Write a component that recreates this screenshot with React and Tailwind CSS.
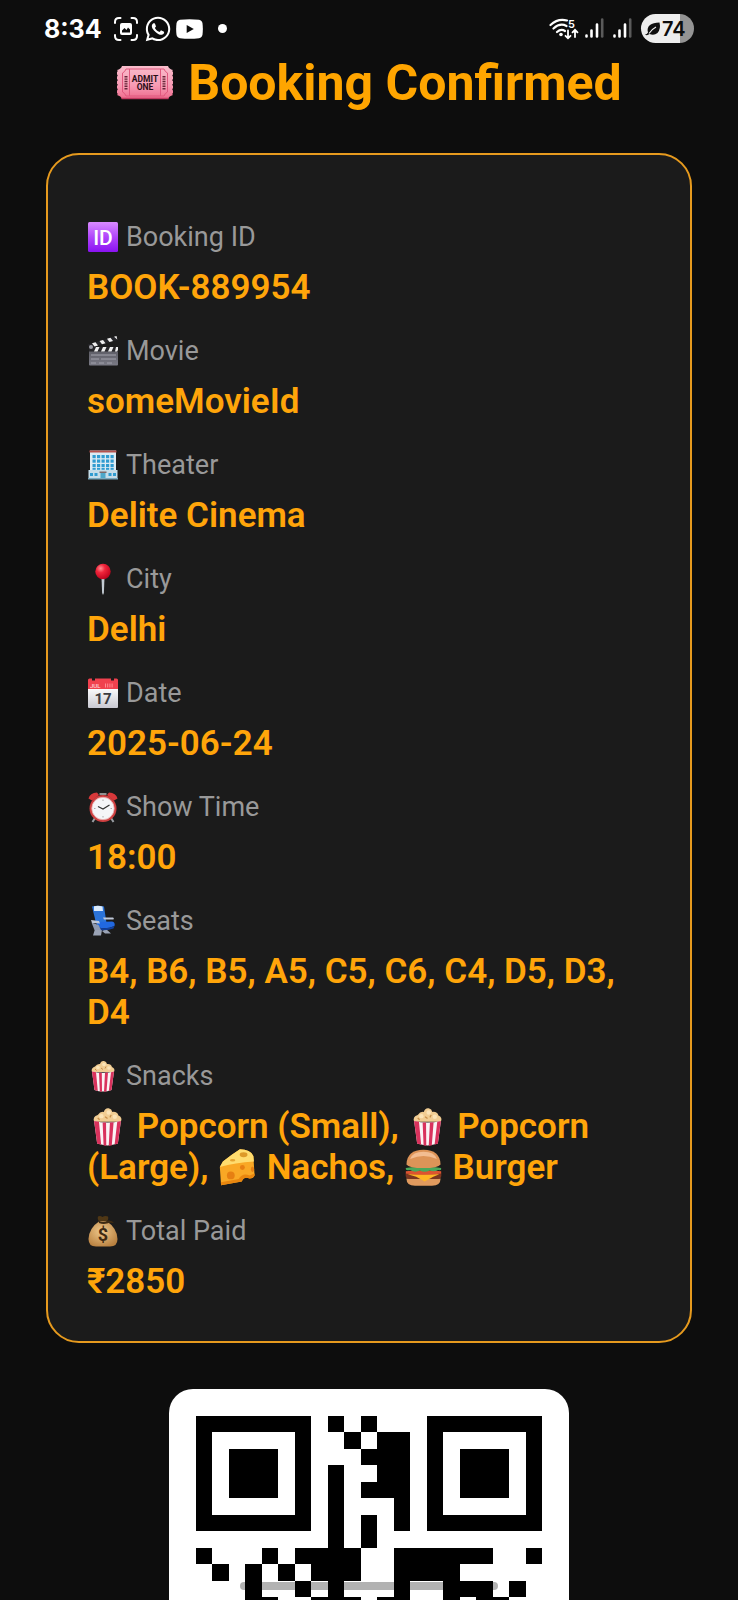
import React from "react";
import { FaWhatsapp } from "react-icons/fa";

function Ticket({ className }) {
  const notches = [5, 9.6, 14.2, 18.8, 23.4, 28];
  return (
    <svg viewBox="0 0 58 36" className={className} aria-hidden="true">
      <defs>
        <linearGradient id="tk" x1="0" y1="0" x2="0" y2="1">
          <stop offset="0" stopColor="#f9bccb" />
          <stop offset="0.6" stopColor="#f79ab3" />
          <stop offset="1" stopColor="#ee6a8c" />
        </linearGradient>
      </defs>
      <path d="M6 1H52Q53 4 57 5V30Q53 31 52 34H6Q5 31 1 30V5Q5 4 6 1Z" fill="url(#tk)" />
      <path d="M5.500 33.500H52.500" stroke="#c23a61" strokeWidth="1.600" />
      {notches.map((y) => (
        <g key={y} fill="#0d0d0d">
          <circle cx="0.600" cy={y + 1} r="1.100" />
          <circle cx="57.400" cy={y + 1} r="1.100" />
        </g>
      ))}
      <path d="M10 4H48Q49 7 51.500 8V27Q49 28 48 31H10Q9 28 6.500 27V8Q9 7 10 4Z" fill="none" stroke="#e0587e" strokeWidth="1" />
      <path d="M13.500 4V31M44.500 4V31" stroke="#e0587e" strokeWidth="1" />
      <path d="M10 11V25M48 11V25" stroke="#66283a" strokeWidth="3" strokeDasharray="1.400 1" />
      <g fill="#2a0e16" fontFamily="Roboto, sans-serif" fontWeight="700" fontSize="8.500" textAnchor="middle">
        <text x="29" y="16.500">ADMIT</text>
        <text x="29" y="25">ONE</text>
      </g>
    </svg>
  );
}

function IdBadge() {
  return (
    <>
      <defs>
        <linearGradient id="idg" x1="0" y1="0" x2="0" y2="1">
          <stop offset="0" stopColor="#d98bff" />
          <stop offset="0.500" stopColor="#b046fb" />
          <stop offset="1" stopColor="#8a12f2" />
        </linearGradient>
      </defs>
      <rect x="1" y="1" width="30" height="30" rx="1.500" fill="url(#idg)" />
      <text x="16" y="23.500" fill="#fff" fontFamily="Roboto, sans-serif" fontWeight="500" fontSize="21" textAnchor="middle">ID</text>
    </>
  );
}

function Clapper() {
  return (
    <>
      <defs>
        <linearGradient id="clg" x1="0" y1="0" x2="0" y2="1">
          <stop offset="0" stopColor="#55555d" />
          <stop offset="1" stopColor="#7b7b86" />
        </linearGradient>
      </defs>
      <path d="M1 9.500L29.500 1L30.500 5L2.500 13Z" fill="#26262a" />
      <path d="M5 8.300L8.500 7.300L11 10.500L7.500 11.500ZM12.500 6.100L16 5.100L18.500 8.300L15 9.300ZM20 3.800L23.500 2.800L26 6.100L22.500 7.100ZM27 1.700L29.500 1L30.300 4.500Z" fill="#eee" />
      <rect x="2" y="12" width="29" height="18.500" rx="1" fill="url(#clg)" />
      <rect x="2" y="12" width="29" height="4.500" fill="#26262a" />
      <path d="M9 12H12.500L10.500 16.500H7ZM16 12H19.500L17.500 16.500H14ZM23 12H26.500L24.500 16.500H21ZM29 12H31V15L30 16.500H28Z" fill="#eee" />
      <path d="M4 20H29M4 24H12M14 24H29M4 28H9M12 28H17M20 28H25" stroke="#a3a3ad" strokeWidth="1" />
      <circle cx="4" cy="12" r="2" fill="#9b9ba3" />
    </>
  );
}

function Building() {
  return (
    <>
      <rect x="3" y="1.500" width="26" height="28" fill="#dcebf3" />
      <rect x="2.500" y="1.500" width="27" height="2" fill="#b4524e" />
      <path d="M1.500 21H30.500V29.500H1.500Z" fill="#c4dce8" />
      {[6, 10.500, 15].map((y) =>
        [6, 10.500, 15, 19.500, 24].map((x) => <rect key={x + "-" + y} x={x - 0.500} y={y} width="3.200" height="3.200" fill="#2f9bd0" />)
      )}
      {[6, 10.500, 15, 19.500, 24].map((x) => (
        <rect key={x} x={x - 0.500} y="19" width="3.200" height="1.800" fill="#2f9bd0" />
      ))}
      <path d="M3 24H6V27H3ZM7.500 24H10.500V27H7.500ZM21.500 24H24.500V27H21.500ZM26 24H29V27H26Z" fill="#2f9bd0" />
      <path d="M12.500 22.500H19.500V24H12.500Z" fill="#7d6a6a" />
      <path d="M13.500 24H18.500V29.500H13.500Z" fill="#4ea7c9" />
      <path d="M1 29H31V30.500H1Z" fill="#79a8bd" />
    </>
  );
}

function Pin() {
  return (
    <>
      <defs>
        <radialGradient id="png" cx="0.350" cy="0.300" r="0.700">
          <stop offset="0" stopColor="#ff8e93" />
          <stop offset="0.400" stopColor="#f0253b" />
          <stop offset="1" stopColor="#c0051f" />
        </radialGradient>
      </defs>
      <path d="M14.500 14H17.500L16.900 30L16 32L15.100 30Z" fill="#c3cbd2" />
      <circle cx="16" cy="8.500" r="7.700" fill="url(#png)" />
    </>
  );
}

function Calendar() {
  return (
    <>
      <defs>
        <linearGradient id="cag" x1="0" y1="0" x2="0" y2="1">
          <stop offset="0" stopColor="#fff" />
          <stop offset="1" stopColor="#c9c9d2" />
        </linearGradient>
      </defs>
      <path d="M1 10H31V30Q31 31 30 31H2Q1 31 1 30Z" fill="url(#cag)" />
      <path d="M1 3Q1 1.500 2.500 1.500H5V3.500H8V1.500H24V3.500H27V1.500H29.500Q31 1.500 31 3V12H1Z" fill="#f0414e" />
      <path d="M18 8.500H26" stroke="#ff8c93" strokeWidth="4" strokeDasharray="1 1.200" />
      <text x="3" y="10.500" fill="#ffd5d8" fontFamily="Roboto, sans-serif" fontWeight="500" fontSize="6">JUL</text>
      <text x="16" y="27" fill="#3c3c40" fontFamily="Roboto, sans-serif" fontWeight="700" fontSize="15" textAnchor="middle">17</text>
    </>
  );
}

function Alarm() {
  return (
    <>
      <path d="M8 27L5.500 31M24 27L26.500 31" stroke="#999ea3" strokeWidth="2" />
      <path d="M1.500 7.500Q3 2 10 1.500L12 4L5 9.500ZM30.500 7.500Q29 2 22 1.500L20 4L27 9.500Z" fill="#d8383a" />
      <path d="M12.500 3H19.500" stroke="#bbb" strokeWidth="1.500" />
      <circle cx="16" cy="17.500" r="13.500" fill="#cf3f40" />
      <circle cx="16" cy="17.500" r="11.200" fill="#f5f5f8" />
      <circle cx="16" cy="17.500" r="11.200" fill="none" stroke="#e7a9a9" strokeWidth="0.800" />
      <path d="M11 15.500L16 18L22.500 14" fill="none" stroke="#333" strokeWidth="1.200" />
      <path d="M16 8.500V10M16 25V26.500M7 17.500H8.500M23.500 17.500H25" stroke="#999" strokeWidth="0.800" />
    </>
  );
}

function Seat() {
  return (
    <>
      <path d="M8 24L6 30.500H14L15 25ZM19 24L24 28.500H18L15 26Z" fill="#9aa3b5" />
      <path d="M5 1.500Q11 0 17 1.500L19.500 18H9Z" fill="#2b73d8" />
      <path d="M7 1.300Q11 0.300 15.500 1.500L16 6H7Z" fill="#dcebfb" />
      <path d="M9 17L25 16.500Q28.500 17 27.500 21Q20 24.500 11 22.500Z" fill="#2168e0" />
      <path d="M11 22.500Q20 24.500 27.500 21L26.500 23.500Q20 26 13 25Z" fill="#123f9c" />
      <path d="M16 12.500L26 12.500Q27.500 13 26.500 14.500L17 14.500ZM4 15L12 16L13 18.500L5 18Z" fill="#bfc8d8" />
      <path d="M4.500 17.500L7.500 25H14L11.500 20Z" fill="#8e99b0" />
    </>
  );
}

function Popcorn() {
  return (
    <>
      <path d="M5 12Q3.500 8 8 6.500Q10 3.500 13 4Q14 0.500 17 1Q19.500 1.500 20 4Q24 3.500 25 7Q28.500 8.500 27 12Z" fill="#f1cd93" />
      <circle cx="11" cy="7.500" r="1.800" fill="#fbe4b8" />
      <circle cx="17" cy="4.500" r="1.800" fill="#fbe4b8" />
      <circle cx="22" cy="8" r="1.800" fill="#fbe4b8" />
      <path d="M14 8L16 9.500M19 6.500L18 8.500M8 9L9.500 10.500" stroke="#c98f4a" strokeWidth="1" />
      <path d="M5 11.500Q16 14 27 11.500L24.500 30Q16 33 7.500 30Z" fill="#faf3f5" />
      <path d="M5 11.500L9 12.200L10.800 31L7.500 30ZM12 12.700L14.800 12.800L15 31.800L12.800 31.500ZM18 12.800L21 12.600L19.500 31.500L17 31.800ZM24 12.200L27 11.500L24.500 30L21.800 31Z" fill="#d9325d" />
    </>
  );
}

function Cheese() {
  return (
    <>
      <path d="M1.500 15.500L4 11Q11 5.500 18 1Q26.500 1 29 6.500L30 22.500Q29 25 26 25Q21 23 19.500 27.500L2.500 30.500Z" fill="#f9a825" />
      <path d="M1.500 15.500L4 11Q11 5.500 18 1Q26.500 1 29 6.500L29.500 11Q14 12 1.500 15.500Z" fill="#ffdc6e" />
      <path d="M2.500 30.500L2.400 28L17 25.500Q20 20 26 22.500L30 21V22.500Q29 25 26 25Q21 23 19.500 27.500Z" fill="#e8860f" />
      <circle cx="10.500" cy="22.500" r="3.200" fill="#e67f12" />
      <circle cx="20" cy="16" r="2" fill="#e67f12" />
      <ellipse cx="28.300" cy="17.500" rx="1.300" ry="2.300" fill="#e67f12" />
      <ellipse cx="21" cy="5.500" rx="3.200" ry="2" fill="#dd9a28" />
      <ellipse cx="12" cy="10" rx="2.200" ry="1" fill="#e5a42f" />
    </>
  );
}

function Burger() {
  return (
    <>
      <path d="M2 25H30Q30 31 23 31H9Q2 31 2 25Z" fill="#e09a5e" />
      <path d="M1.500 20.500H30.500Q31.500 25 28 25.500H4Q0.500 25 1.500 20.500Z" fill="#7a3520" />
      <path d="M3 21.500H29L24 23.500L17 27.500L10 23.500Z" fill="#ffb524" />
      <path d="M1.500 19Q16 17.500 30.500 19V21Q16 23 1.500 21Z" fill="#dd5330" />
      <path d="M1.500 16.500Q3 15.500 16 15.500Q29 15.500 30.500 16.500Q31 19 28 18Q25 20 21 18.500Q17 20.500 13 18.500Q9 20.500 5 18Q1 19 1.500 16.500Z" fill="#4aa85a" />
      <path d="M2 13.500Q2.500 1.500 16 1.500Q29.500 1.500 30 13.500Q28 16.500 16 16.500Q4 16.500 2 13.500Z" fill="#dd9458" />
      <path d="M5 9Q7 3 16 3Q25 3 27 9Q21 6.500 16 6.500Q11 6.500 5 9Z" fill="#f2bd92" />
    </>
  );
}

function MoneyBag() {
  return (
    <>
      <defs>
        <radialGradient id="mbg" cx="0.450" cy="0.400" r="0.650">
          <stop offset="0" stopColor="#f0c98c" />
          <stop offset="1" stopColor="#b98140" />
        </radialGradient>
      </defs>
      <path d="M11 1.500Q13 0.500 15.500 2Q18 0.200 21 1.500Q22 4 19.500 7H12.500Q10 4 11 1.500Z" fill="#4f3715" />
      <path d="M12.500 6H19.500Q30 13 30.500 24Q30.500 31.500 23 31.500H9Q1.500 31.500 1.500 24Q2 13 12.500 6Z" fill="url(#mbg)" />
      <path d="M11.500 5.500Q16 8 21 5.500Q25 5 27 8Q22 7.500 20 8.500Q16 9.500 12 8Z" fill="#3e2b13" />
      <text x="16" y="26" fill="#3f2a12" fontFamily="Roboto, sans-serif" fontWeight="700" fontSize="18" textAnchor="middle">$</text>
    </>
  );
}

function Emoji({ art: Art, large }) {
  return (
    <svg viewBox="0 0 32 32" aria-hidden="true" className={large ? "inline-block h-[39px] w-[41px] align-[-8px]" : "h-8 w-8 shrink-0"}>
      <Art />
    </svg>
  );
}

const details = [
  { icon: IdBadge, label: "Booking ID", value: "BOOK-889954" },
  { icon: Clapper, label: "Movie", value: "someMovieId" },
  { icon: Building, label: "Theater", value: "Delite Cinema" },
  { icon: Pin, label: "City", value: "Delhi" },
  { icon: Calendar, label: "Date", value: "2025-06-24" },
  { icon: Alarm, label: "Show Time", value: "18:00" },
  { icon: Seat, label: "Seats", value: "B4, B6, B5, A5, C5, C6, C4, D5, D3, D4" },
  {
    icon: Popcorn,
    label: "Snacks",
    value: (
      <>
        <Emoji art={Popcorn} large /> Popcorn (Small), <Emoji art={Popcorn} large /> Popcorn (Large),{" "}
        <Emoji art={Cheese} large /> Nachos, <Emoji art={Burger} large /> Burger
      </>
    ),
  },
  { icon: MoneyBag, label: "Total Paid", value: "₹2850" },
];

const qrRows = [
  "#######.#.#...#######",
  "#.....#..#.##.#.....#",
  "#.###.#...###.#.###.#",
  "#.###.#.#..##.#.###.#",
  "#.###.#.#.###.#.###.#",
  "#.....#.#...#.#.....#",
  "#######.#.#.#.#######",
  "........#.#..........",
  "#...#.####..######..#",
  ".#.#.#.###..####.....",
  "...#..#.#...#..###.#.",
  "...##..###.##..#.##..",
];

function QrCode() {
  return (
    <svg viewBox="0 0 21 21" className="block w-full" shapeRendering="crispEdges" role="img" aria-label="Booking QR code">
      {qrRows.map((row, y) =>
        (row.match(/#+|\.+/g) || []).reduce(
          (acc, run) => {
            if (run[0] === "#") acc.items.push(<rect key={y + "-" + acc.x} x={acc.x} y={y} width={run.length} height="1" />);
            acc.x += run.length;
            return acc;
          },
          { x: 0, items: [] }
        ).items
      )}
    </svg>
  );
}

function SignalBars() {
  return (
    <svg viewBox="0 0 19 21" className="h-[21px] w-[19px]" aria-hidden="true">
      <g strokeWidth="2.600" strokeLinecap="round" stroke="#fff">
        <path d="M1.500 17.500V18.500M6.500 12.500V18.500M12 6.500V18.500" />
        <path d="M17.200 1.500V18.500" stroke="#5a5a5a" />
      </g>
    </svg>
  );
}

function StatusBar() {
  return (
    <header className="flex h-[57px] shrink-0 items-center justify-between px-11 text-white">
      <div className="flex items-center">
        <span className="font-[Inter,sans-serif] text-[25px] font-bold leading-8">8:34</span>
        <svg viewBox="0 0 24 24" className="ml-3 h-6 w-6" fill="none" stroke="#fff" strokeWidth="2" strokeLinecap="round" aria-hidden="true">
          <path d="M1 6V5Q1 1 5 1H6.500M17.500 1H19Q23 1 23 5V6M23 18V19Q23 23 19 23H17.500M6.500 23H5Q1 23 1 19V18" />
          <rect x="6" y="6" width="12" height="12" rx="2" fill="#fff" stroke="none" />
          <path d="M8 15.500V13.500L10.500 11L12.500 13L14 10.500L16 12.500V15.500Z" fill="#0d0d0d" stroke="none" />
        </svg>
        <FaWhatsapp className="ml-[6px] h-7 w-7" aria-hidden="true" />
        <svg viewBox="0 0 27 20" className="ml-1 h-5 w-[27px]" aria-hidden="true">
          <path d="M4 0.800Q13.500 -0.300 23 0.800Q26 1.200 26.500 4.500Q27.200 10 26.500 15.500Q26 18.800 23 19.200Q13.500 20.300 4 19.200Q1 18.800 0.500 15.500Q-0.200 10 0.500 4.500Q1 1.200 4 0.800Z" fill="#fff" />
          <path d="M10.700 6V14L17.800 10Z" fill="#0d0d0d" />
        </svg>
        <span className="ml-[15px] h-[9px] w-[9px] rounded-full bg-white" />
      </div>
      <div className="flex items-center">
        <svg viewBox="0 0 30 22" className="h-[22px] w-[30px]" fill="none" stroke="#fff" strokeWidth="2.200" strokeLinecap="round" aria-hidden="true">
          <path d="M1.500 7Q9 0 18 2.500M4.500 10.500Q11 4.500 17.500 8M8 14Q12 10.500 16 13" />
          <circle cx="12" cy="16.500" r="1.800" fill="#fff" stroke="none" />
          <path d="M19 12.500V20M16.500 17.800L19 20.300L21.500 17.800M26 19V12M23.500 14.300L26 11.800L28.500 14.300" strokeWidth="1.800" />
          <text x="19" y="9.500" fill="#fff" stroke="none" fontFamily="Inter, sans-serif" fontWeight="600" fontSize="11">5</text>
        </svg>
        <div className="ml-[6px] flex gap-[9px]">
          <SignalBars />
          <SignalBars />
        </div>
        <div className="ml-[9px] flex h-[29px] w-[53px] items-center rounded-full bg-linear-to-r from-[#ededed] from-74% to-[#949494] to-74% pl-1 text-[#0d0d0d]">
          <svg viewBox="0 0 16 14" className="h-[14px] w-4" aria-hidden="true">
            <path d="M14.500 0.500Q16 7 12.500 11Q9 14 4.500 12Q2 14 0 12.500Q2 12.300 3 10.500Q1.500 6 5 3Q8 0.500 14.500 0.500Z" fill="#0d0d0d" />
            <path d="M4 11.500Q7 7 11 5" fill="none" stroke="#ededed" strokeWidth="1.200" />
          </svg>
          <span className="ml-[1px] font-[Inter,sans-serif] text-[20px] font-semibold leading-6">74</span>
        </div>
      </div>
    </header>
  );
}

export default function App() {
  return (
    <div className="relative flex h-screen flex-col overflow-hidden bg-[#0d0d0d] font-[Roboto,'Noto_Sans',sans-serif]">
      <StatusBar />
      <main className="-mt-1 flex flex-col items-center px-[46px]">
        <h1 className="flex items-center text-[50px] font-bold leading-[60px] text-[#ffa500]">
          <Ticket className="mr-[14px] h-9 w-[58px]" />
          Booking Confirmed
        </h1>
        <dl className="mt-10 flex w-full flex-col gap-[27px] rounded-[33px] border-2 border-[#e69a1e] bg-[#1b1b1b] px-[39px] pb-[39px] pt-[66px]">
          {details.map((d) => (
            <div key={d.label} className="flex flex-col gap-[14px]">
              <dt className="flex gap-[7px] text-[27px] leading-8 text-[#999]">
                <Emoji art={d.icon} />
                {d.label}
              </dt>
              <dd className="text-[35px] font-semibold leading-[41px] text-[#ffa50a]">{d.value}</dd>
            </div>
          ))}
        </dl>
        <div className="mt-[46px] w-[400px] shrink-0 rounded-3xl bg-white p-[27px]">
          <QrCode />
        </div>
      </main>
      <div className="absolute bottom-[10px] left-1/2 h-2 w-[258px] -translate-x-1/2 rounded-full bg-black/30" />
    </div>
  );
}
